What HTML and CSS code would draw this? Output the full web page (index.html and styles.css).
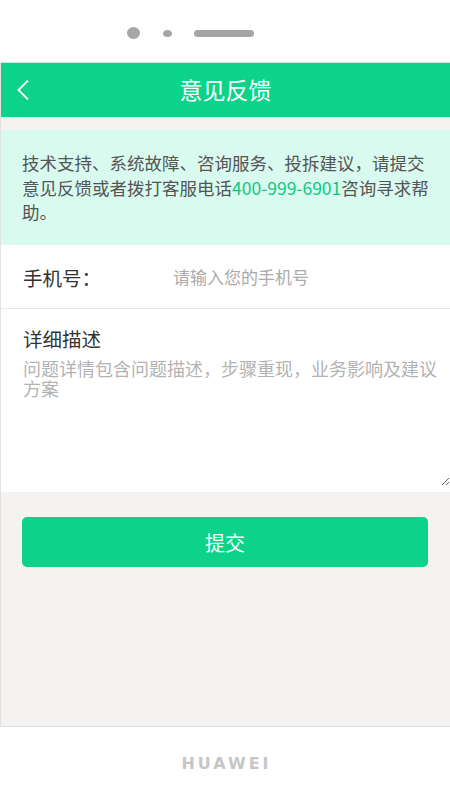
FILE: index.html
```html
<!DOCTYPE html>
<html lang="zh-CN">
<head>
  <meta charset="UTF-8" />
  <meta name="viewport" content="width=device-width, initial-scale=1.0" />
  <title>意见反馈</title>
  <link rel="stylesheet" href="styles.css">
</head>
<body>
  <div class="bezel">
    <span class="camera"></span>
    <span class="sensor"></span>
    <span class="speaker"></span>
  </div>

  <div class="screen">
    <header class="topbar">
      <a href="#" class="back">
        <svg width="14" height="22" viewBox="0 0 14 22">
          <path d="M12 1.5 L2.5 11 L12 20.5" fill="none" stroke="#fff" stroke-width="1.8" />
        </svg>
      </a>
      <h1>意见反馈</h1>
    </header>

    <p class="notice">技术支持、系统故障、咨询服务、投拆建议，请提交意见反馈或者拨打客服电话<span class="phone">400-999-6901</span>咨询寻求帮助。</p>

    <div class="field-row">
      <label class="field-label">手机号：</label>
      <input type="text" class="field-input" placeholder="请输入您的手机号" />
    </div>

    <div class="desc">
      <div class="desc-title">详细描述</div>
      <textarea class="desc-input" placeholder="问题详情包含问题描述，步骤重现，业务影响及建议方案"></textarea>
    </div>

    <button class="submit">提交</button>
  </div>

  <footer class="brand">HUAWEI</footer>
</body>
</html>
```

FILE: styles.css
```css
* {
  margin: 0;
  padding: 0;
  box-sizing: border-box;
}

body {
  width: 450px;
  height: 800px;
  background: #fff;
  font-family: "Noto Sans CJK SC", "Noto Sans", sans-serif;
  color: #333;
  overflow: hidden;
}

/* phone top */
.bezel {
  height: 62px;
  display: flex;
  align-items: center;
  padding-left: 127px;
  padding-top: 4px;
}

.camera {
  width: 13px;
  height: 12px;
  border-radius: 50%;
  background: #a6a6a6;
}

.sensor {
  width: 9px;
  height: 7px;
  border-radius: 50%;
  background: #a6a6a6;
  margin-left: 23px;
}

.speaker {
  width: 60px;
  height: 7px;
  border-radius: 4px;
  background: #a6a6a6;
  margin-left: 22px;
}

.screen {
  height: 665px;
  background: #f4f3f2;
  border-left: 1px solid #e2e2e2;
  border-bottom: 1px solid #dedede;
}

.topbar {
  height: 55px;
  background: #0cd389;
  border-top: 1px solid #c4f1df;
  display: flex;
  align-items: center;
  justify-content: center;
  position: relative;
}

.back {
  position: absolute;
  left: 15px;
  top: 16px;
  display: flex;
}

.topbar h1 {
  font-size: 23px;
  font-weight: normal;
  color: #fff;
  margin-top: -2px;
}

.notice {
  margin-top: 13px;
  height: 115px;
  background: #d9faef;
  padding: 21px 21px 0 21px;
  font-size: 17.5px;
  line-height: 24.5px;
  color: #555;
}

.phone {
  color: #0cc985;
}

.field-row {
  height: 64px;
  background: #fff;
  border-bottom: 1px solid #e8e8e8;
  display: flex;
  align-items: center;
  padding-left: 22px;
}

.field-label {
  width: 150px;
  font-size: 19.5px;
  color: #333;
  margin-top: 2px;
}

.field-input {
  flex: 1;
  border: none;
  outline: none;
  font-family: inherit;
  font-size: 17px;
  color: #333;
  background: transparent;
}

.field-input::placeholder {
  color: #aaa;
}

.desc {
  height: 183px;
  background: #fff;
  padding: 18px 0 0 22px;
  display: flex;
  flex-direction: column;
}

.desc-title {
  font-size: 19.5px;
  line-height: 24px;
  color: #333;
}

.desc-input {
  margin-top: 7px;
  height: 128px;
  border: none;
  outline: none;
  padding: 0 4px 0 0;
  font-family: inherit;
  font-size: 18px;
  line-height: 20px;
  color: #333;
  background: transparent;
}

.desc-input::placeholder {
  color: #b3b3b3;
}

.submit {
  display: block;
  width: 406px;
  height: 50px;
  margin: 25px 0 0 21px;
  border: none;
  border-radius: 5px;
  background: #0cd389;
  color: #fff;
  font-family: inherit;
  font-size: 20px;
}

.brand {
  height: 73px;
  display: flex;
  align-items: center;
  justify-content: center;
  padding-left: 3px;
  font-family: "DejaVu Sans", sans-serif;
  font-weight: bold;
  font-size: 16px;
  letter-spacing: 3px;
  color: #c6c6c6;
}
```
